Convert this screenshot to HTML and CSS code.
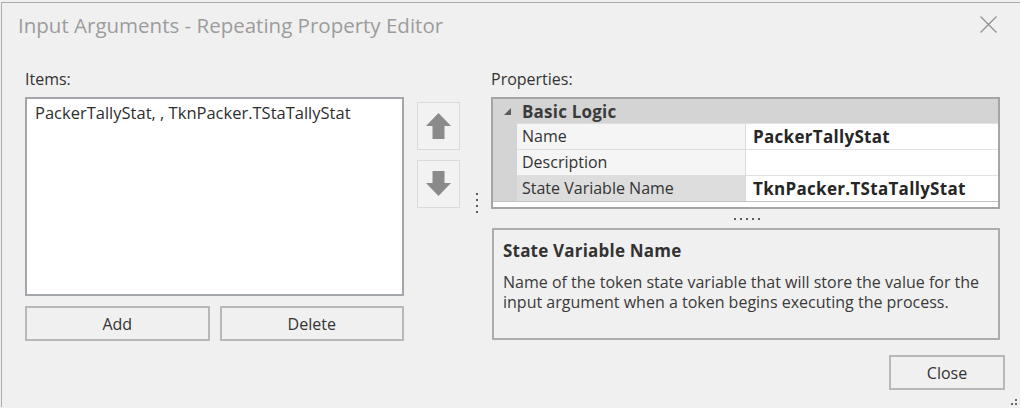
FILE: index.html
```html
<!DOCTYPE html>
<html lang="en">
<head>
<meta charset="utf-8">
<title>Input Arguments - Repeating Property Editor</title>
<link rel="stylesheet" href="styles.css">
</head>
<body>
<div class="window">
  <div class="titlebar">
    <span class="title">Input Arguments - Repeating Property Editor</span>
    <svg class="close-x" width="17" height="17" viewBox="0 0 17 17"><path d="M0.5 0.5 L16.5 16.5 M16.5 0.5 L0.5 16.5" stroke="#8f8f8f" stroke-width="1.2" fill="none"/></svg>
  </div>
  <div class="main">
    <div class="left">
      <div class="label">Items:</div>
      <div class="listbox">
        <div class="item">PackerTallyStat, , TknPacker.TStaTallyStat</div>
      </div>
      <div class="btnrow">
        <button class="btn">Add</button>
        <button class="btn">Delete</button>
      </div>
    </div>
    <div class="arrows">
      <button class="arrow-btn"><svg width="25" height="26" viewBox="0 0 25 26"><polygon points="12.5,0 25,13 18.5,13 18.5,26 6.5,26 6.5,13 0,13" fill="#8a8a8a"/></svg></button>
      <button class="arrow-btn"><svg width="25" height="26" viewBox="0 0 25 26"><polygon points="6.5,0 18.5,0 18.5,12 25,12 12.5,25 0,12 6.5,12" fill="#8a8a8a"/></svg></button>
    </div>
    <div class="vsplit"><span class="dot"></span><span class="dot"></span><span class="dot"></span><span class="dot"></span></div>
    <div class="right">
      <div class="label">Properties:</div>
      <div class="propgrid">
        <div class="cat">
          <svg class="tri" width="7" height="7" viewBox="0 0 7 7"><polygon points="7,0 7,7 0,7" fill="#5a5a5a"/></svg>
          <span class="cat-name">Basic Logic</span>
        </div>
        <div class="prow">
          <div class="gut"></div><div class="pname">Name</div><div class="pval">PackerTallyStat</div>
        </div>
        <div class="prow">
          <div class="gut"></div><div class="pname">Description</div><div class="pval"></div>
        </div>
        <div class="prow selected">
          <div class="gut"></div><div class="pname">State Variable Name</div><div class="pval">TknPacker.TStaTallyStat</div>
        </div>
        <div class="hscroll"></div>
      </div>
      <div class="hsplit"><span class="dot"></span><span class="dot"></span><span class="dot"></span><span class="dot"></span><span class="dot"></span></div>
      <div class="descbox">
        <div class="desc-title">State Variable Name</div>
        <div class="desc-text">Name of the token state variable that will store the value for the input argument when a token begins executing the process.</div>
      </div>
    </div>
  </div>
  <div class="footer">
    <button class="btn close">Close</button>
  </div>
  <div class="grip"><span class="gd g1"></span><span class="gd g2"></span><span class="gd g3"></span></div>
</div>
</body>
</html>
```

FILE: styles.css
```css
html, body {
  margin: 0;
  padding: 0;
  background: #f0f0f0;
  overflow: hidden;
}
body {
  width: 1020px;
  height: 408px;
  font-family: "Open Sans", "Noto Sans", sans-serif;
  font-size: 16px;
  color: #333;
}
.window {
  position: relative;
  margin: 2px 0 0 1px;
  border-top: 1px solid #ababab;
  border-left: 1px solid #ababab;
  height: 405px;
  box-sizing: border-box;
  background: #f0f0f0;
}
.titlebar {
  display: flex;
  justify-content: space-between;
  align-items: flex-start;
  height: 66px;
  padding: 8px 23px 0 16px;
  box-sizing: border-box;
}
.title {
  font-size: 20.5px;
  line-height: 28px;
  color: #9c9c9c;
}
.close-x {
  margin-top: 5px;
}
.main {
  display: flex;
  align-items: flex-start;
  padding-left: 23px;
}
.label {
  line-height: 20px;
  margin-bottom: 8px;
  color: #333;
}
.left {
  width: 379px;
  display: flex;
  flex-direction: column;
}
.listbox {
  height: 199px;
  box-sizing: border-box;
  border: 2px solid #a3a6aa;
  background: #fff;
  padding: 4px 8px;
}
.item {
  line-height: 20px;
  font-size: 16.5px;
  color: #2e2e2e;
}
.btnrow {
  display: flex;
  gap: 10px;
  margin-top: 10px;
}
.btn {
  font-family: inherit;
  font-size: 16px;
  color: #333;
  background: #f0f0f0;
  border: 2px solid #b8b8b8;
  height: 35px;
  padding: 0;
  flex: 1;
}
.arrows {
  margin-left: 13px;
  padding-top: 33px;
  display: flex;
  flex-direction: column;
  gap: 10px;
}
.arrow-btn {
  width: 43px;
  height: 48px;
  background: #f2f2f2;
  border: 1px solid #dadada;
  padding: 0;
  display: flex;
  align-items: center;
  justify-content: center;
}
.vsplit {
  margin-left: 16px;
  padding-top: 124px;
  display: flex;
  flex-direction: column;
  gap: 4px;
}
.dot {
  width: 2px;
  height: 2px;
  background: #5c5c5c;
}
.right {
  margin-left: 13px;
  width: 509px;
  display: flex;
  flex-direction: column;
}
.propgrid {
  border: 2px solid #a5a5a5;
  background: #fff;
}
.cat {
  height: 24px;
  background: #d4d4d4;
  display: flex;
  align-items: center;
}
.tri {
  margin-left: 11px;
  margin-top: 1px;
}
.cat-name {
  margin-left: 11px;
  font-size: 17px;
  font-weight: 700;
  letter-spacing: 0.2px;
  color: #3b3b3b;
}
.prow {
  display: flex;
  height: 26px;
}
.gut {
  width: 24px;
  background: #d4d4d4;
}
.pname {
  width: 223px;
  padding-left: 5px;
  background: #f5f5f5;
  border-top: 1px solid #dedede;
  border-right: 1px solid #dcdcdc;
  line-height: 25px;
  color: #333;
  white-space: nowrap;
}
.prow:first-of-type .pname {
  border-top-color: #f5f5f5;
}
.selected .pname {
  background: #dddddd;
}
.pval {
  flex: 1;
  padding-left: 7px;
  border-top: 1px solid #e2e2e2;
  line-height: 25px;
  font-size: 17px;
  font-weight: 700;
  letter-spacing: 0.3px;
  color: #262626;
  white-space: nowrap;
}
.hscroll {
  height: 5px;
  border-top: 1px solid #c3c3c3;
  background: #fff;
}
.hsplit {
  height: 19px;
  display: flex;
  align-items: center;
  justify-content: center;
  gap: 4px;
  padding-left: 2px;
}
.descbox {
  height: 112px;
  box-sizing: border-box;
  border: 2px solid #adadad;
  padding: 11px 9px 0 9px;
  margin-left: 1px;
}
.desc-title {
  font-size: 17px;
  font-weight: 700;
  letter-spacing: 0.2px;
  line-height: 20px;
  color: #333;
}
.desc-text {
  margin-top: 11px;
  line-height: 20px;
  color: #3a3a3a;
}
.footer {
  display: flex;
  justify-content: flex-end;
  padding: 14px 15px 0 0;
}
.btn.close {
  flex: none;
  width: 116px;
}
.grip {
  position: absolute;
  right: 2px;
  bottom: 0;
  width: 8px;
  height: 8px;
}
.gd {
  position: absolute;
  width: 2px;
  height: 2px;
  background: #6a6a6a;
}
.g1 { right: 1px; top: 0; }
.g2 { right: 1px; top: 4px; }
.g3 { right: 5px; top: 4px; }
```
